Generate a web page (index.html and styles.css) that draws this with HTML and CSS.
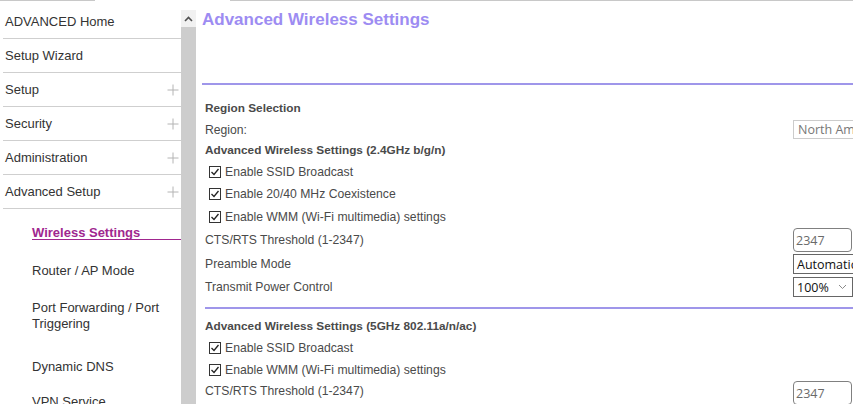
FILE: index.html
```html
<!DOCTYPE html>
<html>
<head>
<meta charset="utf-8">
<link rel="stylesheet" href="styles.css">
</head>
<body>
<div class="topline"><span class="seg seg-a"></span><span class="seg seg-b"></span></div>
<div class="frame">
  <nav class="sidebar">
    <ul class="menu">
      <li class="item"><span>ADVANCED Home</span></li>
      <li class="item"><span>Setup Wizard</span></li>
      <li class="item"><span>Setup</span><svg class="plus" width="12" height="12" viewBox="0 0 12 12"><path d="M6 0.5V11.5M0.5 6H11.5" stroke="#b4b4b4" stroke-width="1"/></svg></li>
      <li class="item"><span>Security</span><svg class="plus" width="12" height="12" viewBox="0 0 12 12"><path d="M6 0.5V11.5M0.5 6H11.5" stroke="#b4b4b4" stroke-width="1"/></svg></li>
      <li class="item"><span>Administration</span><svg class="plus" width="12" height="12" viewBox="0 0 12 12"><path d="M6 0.5V11.5M0.5 6H11.5" stroke="#b4b4b4" stroke-width="1"/></svg></li>
      <li class="item"><span>Advanced Setup</span><svg class="plus" width="12" height="12" viewBox="0 0 12 12"><path d="M6 0.5V11.5M0.5 6H11.5" stroke="#b4b4b4" stroke-width="1"/></svg></li>
    </ul>
    <ul class="submenu">
      <li class="sub sub-active"><span class="sub-link">Wireless Settings</span></li>
      <li class="sub sub-router">Router / AP Mode</li>
      <li class="sub sub-port">Port Forwarding / Port<br>Triggering</li>
      <li class="sub sub-ddns">Dynamic DNS</li>
      <li class="sub sub-vpn">VPN Service</li>
    </ul>
  </nav>
  <div class="scrollbar">
    <div class="scroll-btn"><svg width="9" height="6" viewBox="0 0 9 6"><path d="M1 5L4.5 1.5L8 5" fill="none" stroke="#505050" stroke-width="1.6"/></svg></div>
    <div class="scroll-thumb"></div>
  </div>
  <main class="main">
    <h1 class="title">Advanced Wireless Settings</h1>
    <div class="rule rule-top"></div>
    <div class="rows">
      <div class="row bold">Region Selection</div>
      <div class="row row-21"><span>Region:</span><span class="ctl ctl-region">North America</span></div>
      <div class="row row-21 bold">Advanced Wireless Settings (2.4GHz b/g/n)</div>
      <div class="row cbrow"><svg class="cb" width="12" height="12" viewBox="0 0 12 12"><rect x="0.5" y="0.5" width="11" height="11" fill="#fff" stroke="#333"/><path d="M2.5 6L5 8.5L9.5 3" fill="none" stroke="#222" stroke-width="1.3"/></svg><span>Enable SSID Broadcast</span></div>
      <div class="row cbrow"><svg class="cb" width="12" height="12" viewBox="0 0 12 12"><rect x="0.5" y="0.5" width="11" height="11" fill="#fff" stroke="#333"/><path d="M2.5 6L5 8.5L9.5 3" fill="none" stroke="#222" stroke-width="1.3"/></svg><span>Enable 20/40 MHz Coexistence</span></div>
      <div class="row row-23 cbrow"><svg class="cb" width="12" height="12" viewBox="0 0 12 12"><rect x="0.5" y="0.5" width="11" height="11" fill="#fff" stroke="#333"/><path d="M2.5 6L5 8.5L9.5 3" fill="none" stroke="#222" stroke-width="1.3"/></svg><span>Enable WMM (Wi-Fi multimedia) settings</span></div>
      <div class="row row-24"><span>CTS/RTS Threshold (1-2347)</span><span class="ctl ctl-text">2347</span></div>
      <div class="row row-24"><span>Preamble Mode</span><span class="ctl ctl-select ctl-wide">Automatic</span></div>
      <div class="row"><span>Transmit Power Control</span><span class="ctl ctl-select ctl-power">100%<svg class="chev" width="9" height="6" viewBox="0 0 9 6"><path d="M1 1L4.5 4.5L8 1" fill="none" stroke="#8a8a8a" stroke-width="1"/></svg></span></div>
    </div>
    <div class="rule rule-mid"></div>
    <div class="rows">
      <div class="row bold">Advanced Wireless Settings (5GHz 802.11a/n/ac)</div>
      <div class="row cbrow"><svg class="cb" width="12" height="12" viewBox="0 0 12 12"><rect x="0.5" y="0.5" width="11" height="11" fill="#fff" stroke="#333"/><path d="M2.5 6L5 8.5L9.5 3" fill="none" stroke="#222" stroke-width="1.3"/></svg><span>Enable SSID Broadcast</span></div>
      <div class="row row-21 cbrow"><svg class="cb" width="12" height="12" viewBox="0 0 12 12"><rect x="0.5" y="0.5" width="11" height="11" fill="#fff" stroke="#333"/><path d="M2.5 6L5 8.5L9.5 3" fill="none" stroke="#222" stroke-width="1.3"/></svg><span>Enable WMM (Wi-Fi multimedia) settings</span></div>
      <div class="row row-24 row-top"><span class="lbl-mid">CTS/RTS Threshold (1-2347)</span><span class="ctl ctl-text">2347</span></div>
    </div>
  </main>
</div>
</body>
</html>
```
FILE: styles.css
```css
html, body {
  margin: 0;
  padding: 0;
  width: 853px;
  height: 404px;
  overflow: hidden;
  background: #fff;
  font-family: "Liberation Sans", Arial, sans-serif;
}

.topline {
  display: flex;
  height: 1px;
}
.seg {
  display: block;
  height: 1px;
  background: #c8c8c8;
}
.seg-a { width: 95px; }
.seg-b { margin-left: 135px; flex: 1; }

.frame {
  display: flex;
  height: 403px;
}

/* sidebar */
.sidebar {
  width: 181px;
  flex: none;
  overflow: hidden;
  font-size: 13px;
  color: #333;
}
.menu {
  list-style: none;
  margin: 4px 0 0 3px;
  padding: 0;
}
.item {
  box-sizing: border-box;
  height: 34px;
  border-bottom: 1px solid #cfcfcf;
  display: flex;
  align-items: center;
  justify-content: space-between;
  padding: 0 2px 0 2px;
}
.plus { flex: none; margin-right: 0; }

.submenu {
  list-style: none;
  margin: 0 0 0 32px;
  padding: 0;
}
.sub {
  line-height: 16px;
  white-space: nowrap;
}
.sub-active {
  padding-top: 17px;
}
.sub-link {
  display: block;
  line-height: 13px;
  font-weight: bold;
  color: #a0278f;
  border-bottom: 1px solid #a0278f;
}
.sub-router { margin-top: 23px; }
.sub-port { margin-top: 21px; }
.sub-ddns { margin-top: 27px; }
.sub-vpn { margin-top: 19px; }

/* scrollbar */
.scrollbar {
  width: 15px;
  flex: none;
  margin-top: 9px;
  display: flex;
  flex-direction: column;
}
.scroll-btn {
  height: 17px;
  background: #f1f1f1;
  display: flex;
  align-items: center;
  justify-content: center;
}
.scroll-thumb {
  flex: 1;
  background: #cdcdcd;
}

/* main */
.main {
  flex: 1;
  min-width: 0;
  margin-left: 4px;
  overflow: hidden;
  color: #4a4a4a;
  font-size: 12.2px;
}
.title {
  margin: 9px 0 0 2px;
  font-size: 17px;
  line-height: 20px;
  font-weight: bold;
  color: #9d8cf2;
  white-space: nowrap;
}
.rule {
  height: 2px;
  background: #9f96ea;
}
.rule-top {
  margin: 53px 0 12px 2px;
}
.rule-mid {
  margin: 9px 0 6px 5px;
}
.rows {
  margin-left: 5px;
}
.row {
  height: 22px;
  display: grid;
  grid-template-columns: 588px 1fr;
  align-items: center;
  white-space: nowrap;
}
.row-21 { height: 21px; }
.row-23 { height: 23px; }
.row-24 { height: 24px; }
.row-top { align-items: start; }
.row-top .lbl-mid { padding-top: 4px; }
.row-top .ctl-text { margin-top: 1px; }
.bold {
  font-weight: bold;
  font-size: 11.8px;
  display: block;
  line-height: 22px;
}
.row-21.bold { line-height: 21px; }

.cbrow {
  display: flex;
  align-items: center;
}
.cb {
  flex: none;
  margin: 0 4px 0 4px;
}

/* controls */
.ctl {
  box-sizing: border-box;
  display: flex;
  align-items: center;
  font-family: "Open Sans", "DejaVu Sans", sans-serif;
  font-size: 12.5px;
  white-space: nowrap;
  overflow: hidden;
  background: #fff;
}
.ctl-region {
  width: 90px;
  height: 19px;
  border: 1px solid #cccccc;
  color: #777;
  padding-left: 4px;
}
.ctl-text {
  width: 59px;
  height: 24px;
  border: 1px solid #808080;
  border-radius: 4px;
  color: #6a6a6a;
  padding-left: 2px;
}
.ctl-select {
  height: 20px;
  border: 1px solid #666;
  color: #111;
  padding-left: 3px;
}
.ctl-wide { width: 90px; }
.ctl-power {
  width: 60px;
  justify-content: space-between;
  padding-right: 5px;
}
.chev { flex: none; }
```
